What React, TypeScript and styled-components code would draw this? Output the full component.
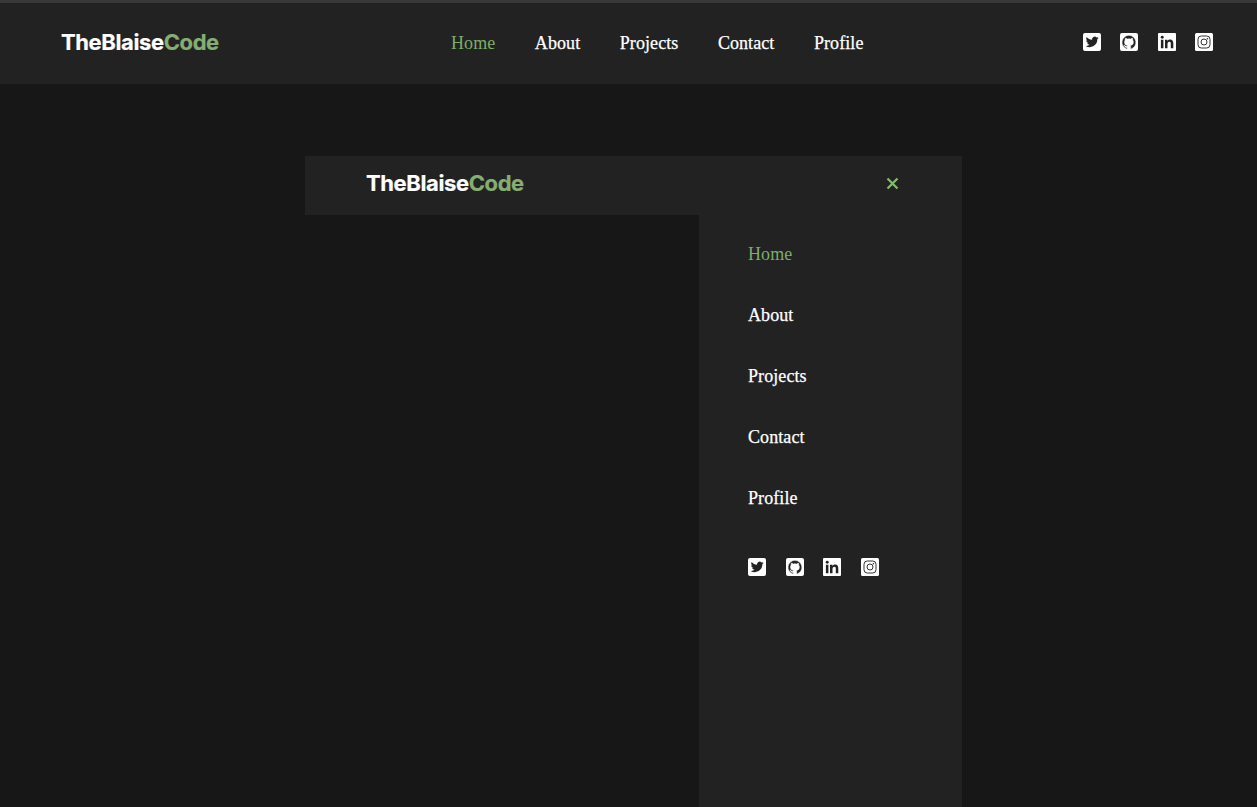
import React from "react";
import styled, { createGlobalStyle } from "styled-components";

const GlobalStyle = createGlobalStyle`
  * { box-sizing: border-box; }
  body {
    margin: 0;
    background: #171717;
    font-family: "Liberation Serif", "Times New Roman", serif;
    overflow: hidden;
  }
`;

const Page = styled.div`
  height: 100vh;
  display: flex;
  flex-direction: column;
  align-items: center;
  overflow: hidden;
`;

const Header = styled.header`
  width: 100%;
  height: 84px;
  flex: none;
  display: flex;
  align-items: center;
  justify-content: space-between;
  padding: 0 44px 0 61px;
  background: #222;
  border-top: 3px solid #383838;
`;

const Brand = styled.div<{ $lift: number }>`
  width: 171px;
  font: 700 22px/28px Inter, sans-serif;
  letter-spacing: -0.39px;
  -webkit-text-stroke: 0.2px currentColor;
  color: #fff;
  white-space: nowrap;
  margin-bottom: ${(p) => p.$lift}px;
`;

const Accent = styled.span`
  color: #85ae72;
`;

const Menu = styled.nav<{ $vertical?: boolean }>`
  display: flex;
  flex-direction: ${(p) => (p.$vertical ? "column" : "row")};
  align-items: flex-start;
  gap: ${(p) => (p.$vertical ? "40px" : "39.5px")};
`;

const MenuLink = styled.a<{ $active?: boolean }>`
  font-size: 18px;
  line-height: 21px;
  letter-spacing: 0.08px;
  -webkit-text-stroke: ${(p) => (p.$active ? "0" : "0.25px #fff")};
  color: ${(p) => (p.$active ? "#7cad6a" : "#fff")};
`;

const SocialRow = styled.div<{ $lift?: number }>`
  display: flex;
  gap: 19.5px;
  color: #fff;
  margin-bottom: ${(p) => p.$lift ?? 0}px;
`;

const SocialIcon = styled.svg`
  display: block;
  width: 18px;
  height: 18px;
`;

const Mobile = styled.section`
  width: 657px;
  flex: 1;
  margin: 72px 0 0 10px;
  display: flex;
  flex-direction: column;
  align-items: flex-end;
`;

const MobileBar = styled.div`
  width: 100%;
  height: 59px;
  flex: none;
  display: flex;
  align-items: center;
  justify-content: space-between;
  padding: 0 63px 0 61px;
  background: #222;
`;

const CloseIcon = styled.svg`
  width: 13px;
  height: 13px;
  display: block;
  margin-bottom: 4px;
`;

const Drawer = styled.aside`
  width: 263px;
  flex: 1;
  padding: 29px 49px;
  background: #222;
  display: flex;
  flex-direction: column;
  gap: 49.4px;
`;

const links = ["Home", "About", "Projects", "Contact", "Profile"];

const Logo = ({ lift }: { lift: number }) => (
  <Brand $lift={lift}>
    TheBlaise<Accent>Code</Accent>
  </Brand>
);

const Links = ({ vertical }: { vertical?: boolean }) => (
  <Menu $vertical={vertical}>
    {links.map((label, i) => (
      <MenuLink key={label} $active={i === 0}>
        {label}
      </MenuLink>
    ))}
  </Menu>
);

const Socials = ({ lift }: { lift?: number }) => (
  <SocialRow $lift={lift}>
    <SocialIcon viewBox="0 0 18 18">
      <rect width="18" height="18" rx="2" fill="#fff" />
      <path
        transform="translate(2.7 2.4) scale(.54)"
        fill="#222"
        d="M23.95 4.57a10 10 0 0 1-2.82.77 4.96 4.96 0 0 0 2.16-2.72c-.95.55-2 .95-3.13 1.18a4.92 4.92 0 0 0-8.38 4.48C7.69 8.1 4.07 6.13 1.64 3.16a4.92 4.92 0 0 0 1.52 6.57 4.9 4.9 0 0 1-2.23-.61v.06c0 2.38 1.7 4.37 3.95 4.82a5 5 0 0 1-2.22.09 4.94 4.94 0 0 0 4.6 3.42A9.87 9.87 0 0 1 0 19.54a14 14 0 0 0 7.55 2.21c9.06 0 14.01-7.5 14.01-13.98l-.02-.63a10 10 0 0 0 2.41-2.57z"
      />
    </SocialIcon>
    <SocialIcon viewBox="0 0 18 18">
      <rect width="18" height="18" rx="2" fill="#fff" />
      <path
        transform="translate(2 2.2) scale(.58)"
        fill="#222"
        stroke="#fff"
        strokeWidth=".9"
        d="M12 .3a12 12 0 0 0-3.8 23.38c.6.12.83-.26.83-.57L9 21.07c-3.34.72-4.04-1.61-4.04-1.61-.55-1.39-1.34-1.76-1.34-1.76-1.08-.74.09-.73.09-.73 1.2.09 1.83 1.24 1.83 1.24 1.08 1.83 2.81 1.3 3.5 1 .1-.78.42-1.31.76-1.61-2.67-.3-5.47-1.33-5.47-5.93 0-1.31.47-2.38 1.24-3.22-.14-.3-.54-1.52.1-3.18 0 0 1-.32 3.3 1.23a11.5 11.5 0 0 1 6 0c2.28-1.55 3.29-1.23 3.29-1.23.64 1.66.24 2.88.12 3.18a4.65 4.65 0 0 1 1.23 3.22c0 4.61-2.8 5.63-5.48 5.92.42.36.81 1.1.81 2.22l-.01 3.29c0 .31.2.69.82.57A12 12 0 0 0 12 .3z"
      />
    </SocialIcon>
    <SocialIcon viewBox="0 0 18 18">
      <rect width="18" height="18" rx="1" fill="#fff" />
      <g fill="#222">
        <circle cx="4.2" cy="4.2" r="1.45" />
        <path d="M2.9 6.7h2.5v8.5H2.9zM7 6.7h2.4v1.2c.4-.7 1.3-1.4 2.6-1.4 2.7 0 3.3 1.7 3.3 4v4.7h-2.5V11c0-1 0-2.3-1.4-2.3S9.5 9.8 9.5 11v4.2H7z" />
      </g>
    </SocialIcon>
    <SocialIcon viewBox="0 0 18 18">
      <rect width="18" height="18" rx="1.5" fill="#fff" />
      <g fill="none" stroke="#333">
        <rect x="3" y="3" width="12" height="12" rx="3.3" />
        <circle cx="9" cy="9" r="3" />
      </g>
      <circle cx="12.4" cy="5.7" r=".8" fill="#333" />
    </SocialIcon>
  </SocialRow>
);

export default function App() {
  return (
    <Page>
      <GlobalStyle />
      <Header>
        <Logo lift={3} />
        <Links />
        <Socials lift={3} />
      </Header>
      <Mobile>
        <MobileBar>
          <Logo lift={5} />
          <CloseIcon viewBox="0 0 13 13" fill="none" stroke="#85b76f" strokeWidth="2.3">
            <path d="M1.5 1.5 11.5 11.5M11.5 1.5 1.5 11.5" />
          </CloseIcon>
        </MobileBar>
        <Drawer>
          <Links vertical />
          <Socials />
        </Drawer>
      </Mobile>
    </Page>
  );
}
